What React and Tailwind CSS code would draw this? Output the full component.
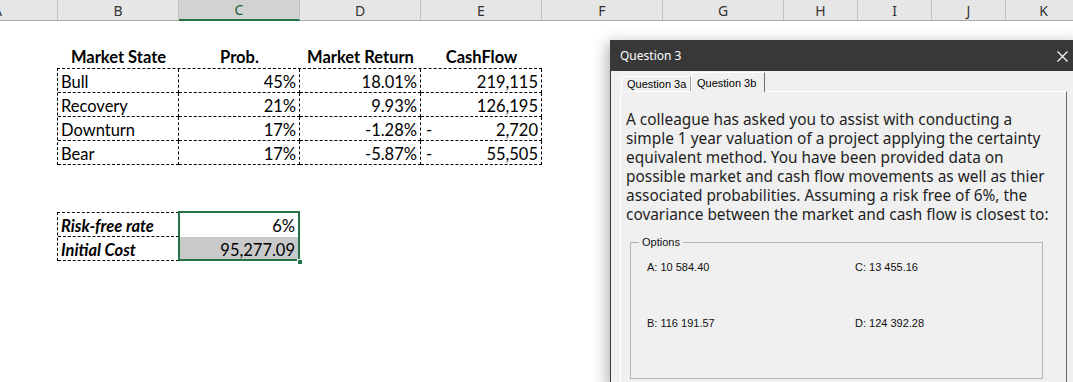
import React from 'react';

// Excel-ish sheet behind a modal "Question 3" dialog

const SHEET_FONT = "font-['Lato','Liberation_Sans',sans-serif]";
const UI_FONT = "font-['Noto_Sans','Liberation_Sans',sans-serif]";

const COLUMNS = [
  { id: 'A', w: 'w-[58px]' },
  { id: 'B', w: 'w-[121px]' },
  { id: 'C', w: 'w-[121px]', selected: true },
  { id: 'D', w: 'w-[121px]' },
  { id: 'E', w: 'w-[121px]' },
  { id: 'F', w: 'w-[121px]' },
  { id: 'G', w: 'w-[121px]' },
  { id: 'H', w: 'w-[74px]' },
  { id: 'I', w: 'w-[74px]' },
  { id: 'J', w: 'w-[74px]' },
  { id: 'K', w: 'w-[76px]' },
];

const MARKET = [
  { state: 'Bull', prob: '45%', ret: '18.01%', neg: false, cash: '219,115' },
  { state: 'Recovery', prob: '21%', ret: '9.93%', neg: false, cash: '126,195' },
  { state: 'Downturn', prob: '17%', ret: '-1.28%', neg: true, cash: '2,720' },
  { state: 'Bear', prob: '17%', ret: '-5.87%', neg: true, cash: '55,505' },
];

const OPTIONS = ['A: 10 584.40', 'C: 13 455.16', 'B: 116 191.57', 'D: 124 392.28'];

const cell = 'flex h-[24px] w-[121px] shrink-0 items-center pt-[3px] border-r border-b border-dashed border-black';

function ColumnHeader() {
  return (
    <div className={`flex h-[21px] bg-[#e6e6e6] ${UI_FONT} text-[14px] text-[#333]`}>
      {COLUMNS.map((c) => (
        <div
          key={c.id}
          className={`${c.w} shrink-0 flex items-center border-r border-r-[#c0c0c0] ${
            c.id === 'A' ? 'justify-start' : 'justify-center'
          } ${
            c.selected
              ? 'bg-[#d2d2d2] border-b-2 border-b-[#217346] text-[#1d5e3b]'
              : 'border-b border-b-[#ababab]'
          }`}
        >
          <span className={c.id === 'A' ? '-ml-[7px]' : ''}>{c.id}</span>
        </div>
      ))}
    </div>
  );
}

function Sheet() {
  return (
    <div className={`${SHEET_FONT} text-[16.5px] text-black`}>
      <ColumnHeader />
      <div className="h-[23px]" />

      {/* row 2: headings */}
      <div className="flex h-[24px] pt-[2px] font-bold">
        <div className="w-[58px] shrink-0" />
        <div className="flex w-[121px] shrink-0 items-center justify-center">Market State</div>
        <div className="flex w-[121px] shrink-0 items-center justify-center">Prob.</div>
        <div className="flex w-[121px] shrink-0 items-center justify-center">Market Return</div>
        <div className="flex w-[121px] shrink-0 items-center justify-center">CashFlow</div>
      </div>

      {/* rows 3-6 */}
      <div className="flex">
        <div className="w-[57px] shrink-0" />
        <div className="border-l border-t border-dashed border-black">
          {MARKET.map((r) => (
            <div key={r.state} className="flex">
              <div className={`${cell} pl-[3px]`}>{r.state}</div>
              <div className={`${cell} justify-end pr-[3px]`}>{r.prob}</div>
              <div className={`${cell} justify-end pr-[3px]`}>{r.ret}</div>
              <div className={`${cell} justify-between pl-[5px] pr-[3px]`}>
                <span>{r.neg ? '-' : ''}</span>
                <span>{r.cash}</span>
              </div>
            </div>
          ))}
        </div>
      </div>

      <div className="h-[47px]" />

      {/* rows 9-10 */}
      <div className="flex">
        <div className="w-[57px] shrink-0" />
        <div className="border-l border-t border-dashed border-black font-bold italic">
          <div className={`${cell} pl-[3px]`}>Risk-free rate</div>
          <div className={`${cell} pl-[3px]`}>Initial Cost</div>
        </div>
        <div className="relative mt-[1px] flex flex-col">
          <div className="flex h-[24px] w-[121px] items-center justify-end pr-[5px] pt-[3px]">6%</div>
          <div className="flex h-[24px] w-[121px] items-center justify-end bg-[#c9c9c9] pr-[5px] pt-[3px]">95,277.09</div>
          <div className="absolute -left-[1px] -top-[2px] h-[50px] w-[122px] border-2 border-[#217346]" />
          <div className="absolute -bottom-[4px] -right-[3px] h-[6px] w-[6px] border border-white bg-[#217346]" />
        </div>
      </div>
    </div>
  );
}

function QuestionDialog() {
  return (
    <div
      className={`absolute left-[610px] top-[40px] h-[350px] w-[472px] border border-[#3c3c3c] bg-[#f0f0f0] shadow-[-3px_3px_14px_rgba(0,0,0,0.3)] ${UI_FONT}`}
    >
      <div className="flex h-[30px] items-center justify-between bg-[#383838] pl-[9px] pr-[13px]">
        <span className="text-[12px] text-white">Question 3</span>
        <svg width="11" height="11" viewBox="0 0 11 11" className="text-white">
          <path d="M0.5 0.5L10.5 10.5M10.5 0.5L0.5 10.5" stroke="currentColor" strokeWidth="1.1" fill="none" />
        </svg>
      </div>

      <div className="ml-[10px] mt-[1px] flex h-[19px] items-end font-['Liberation_Sans',sans-serif] text-[11px] text-black">
        <div className="flex h-[15px] w-[70px] items-center whitespace-nowrap border-t border-l border-t-white border-l-white border-r border-r-[#a0a0a0] px-[5px]">
          Question 3a
        </div>
        <div className="relative z-10 -mb-[1px] flex h-[20px] w-[74px] items-start whitespace-nowrap border-t border-l border-t-white border-l-white border-r border-r-[#6d6d6d] bg-[#f0f0f0] px-[5px] pt-[2px]">
          Question 3b
        </div>
      </div>

      <div className="ml-[9px] h-[300px] w-[447px] border-t border-l border-t-white border-l-white border-r border-r-[#6d6d6d]">
        <div className="px-[5px] pt-[18px] text-[15.4px] leading-[19px] text-[#1e1e1e]">
          <div className="whitespace-nowrap">A colleague has asked you to assist with conducting a</div>
          <div className="whitespace-nowrap">simple 1 year valuation of a project applying the certainty</div>
          <div className="whitespace-nowrap">equivalent method. You have been provided data on</div>
          <div className="whitespace-nowrap">possible market and cash flow movements as well as thier</div>
          <div className="whitespace-nowrap">associated probabilities. Assuming a risk free of 6%, the</div>
          <div className="whitespace-nowrap">covariance between the market and cash flow is closest to:</div>
        </div>

        <fieldset className="ml-[9px] mt-[12px] h-[143px] w-[413px] border border-[#b4b4b4] px-[8px] font-['Liberation_Sans',sans-serif] text-[11px] text-[#111]">
          <legend className="px-[3px] leading-[13px]">Options</legend>
          <div className="grid grid-cols-[208px_1fr] gap-y-[43px] pl-[8px] pt-[12px] leading-[13px]">
            {OPTIONS.map((o) => (
              <span key={o}>{o}</span>
            ))}
          </div>
        </fieldset>
      </div>
    </div>
  );
}

export default function App() {
  return (
    <div className="relative h-[382px] w-[1073px] overflow-hidden bg-white">
      <Sheet />
      <QuestionDialog />
    </div>
  );
}
